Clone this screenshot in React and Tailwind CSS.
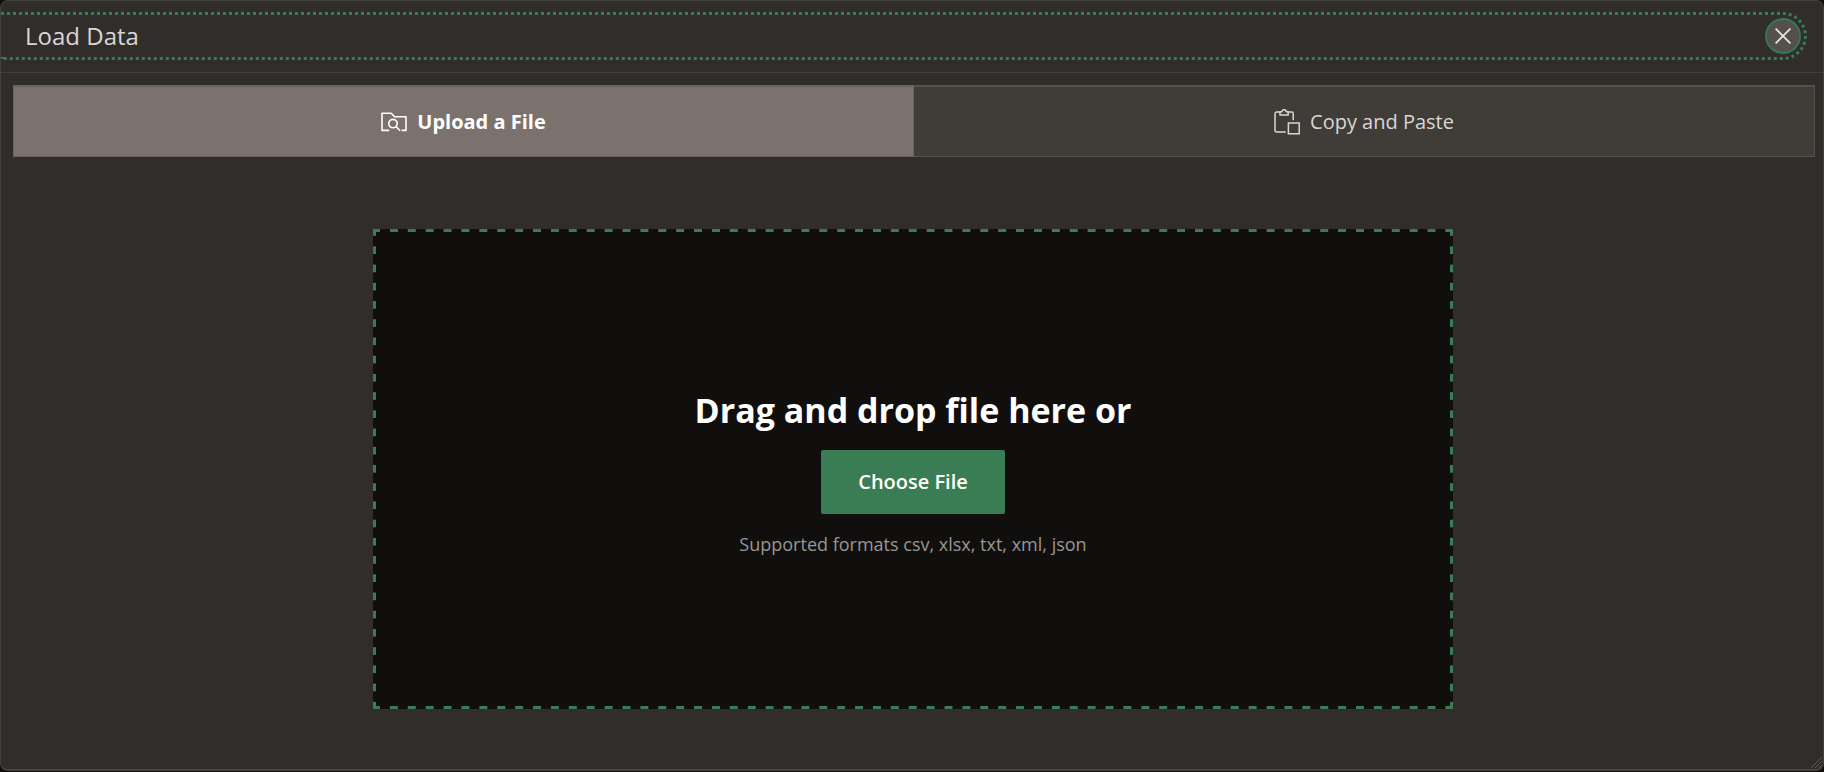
import React, { useRef } from "react";

function FolderSearchIcon() {
  return (
    <svg className="size-[26px]" viewBox="0 0 26 26" fill="none" stroke="currentColor" strokeWidth="1.6" aria-hidden="true">
      <path d="M8.2 21.4H1V4.2h9.2l3.4 3.6H25v13.6h-4.4" strokeLinejoin="round" />
      <circle cx="12" cy="14.6" r="4.2" />
      <path d="M15.1 17.8l4 4" />
    </svg>
  );
}

function ClipboardIcon() {
  return (
    <svg className="size-[26px]" viewBox="0 0 26 26" fill="none" stroke="currentColor" strokeWidth="1.5" aria-hidden="true">
      <path d="M6 3H2.6A1.6 1.6 0 0 0 1 4.6v16.8A1.6 1.6 0 0 0 2.6 23h9.2M14.2 3h3.4a1.6 1.6 0 0 1 1.6 1.6v6.6" />
      <path d="M6 2.8h2a2.1 2.1 0 0 1 4.2 0h2V6H6z" strokeLinejoin="round" />
      <rect x="14.4" y="14" width="10.8" height="10.8" />
    </svg>
  );
}

export default function App() {
  const fileRef = useRef(null);
  return (
    <div className="min-h-screen bg-[#100f0e] pb-px font-['Open_Sans','Noto_Sans',sans-serif] text-[#d9d6d3]">
      <section
        role="dialog"
        aria-labelledby="dialog-title"
        className="relative flex min-h-[calc(100vh-1px)] flex-col overflow-hidden rounded-lg border border-b-2 border-[#45413d] bg-[#312d2a]"
      >
        <header className="border-b border-[#45413d] pt-[11px] pr-4 pb-3">
          <div className="flex h-12 items-center justify-between rounded-r-full border-y-3 border-r-3 border-dotted border-[#3a7d54] pr-[3px] pl-6">
            <h1 id="dialog-title" className="text-2xl">Load Data</h1>
            <button
              type="button"
              aria-label="Close"
              className="flex size-9 items-center justify-center rounded-full border-2 border-[#33794f] bg-[#55504b] text-[#e8e6e4]"
            >
              <svg className="size-4" viewBox="0 0 16 16" fill="none" stroke="currentColor" strokeWidth="1.8" aria-hidden="true">
                <path d="M.6.6l14.8 14.8M15.4.6L.6 15.4" />
              </svg>
            </button>
          </div>
        </header>

        <div role="tablist" className="mt-3 mr-2 ml-3 grid h-[72px] grid-cols-2 text-xl">
          <button
            type="button"
            role="tab"
            aria-selected="true"
            className="flex items-center justify-center gap-2.5 border border-t-2 border-[#6a625d] bg-[#7b726d] font-bold text-white"
          >
            <FolderSearchIcon />
            Upload a File
          </button>
          <button
            type="button"
            role="tab"
            aria-selected="false"
            className="flex items-center justify-center gap-2.5 border border-t-2 border-l-0 border-[#55504a] bg-[#403c38]"
          >
            <ClipboardIcon />
            Copy and Paste
          </button>
        </div>

        <main className="mr-2.5 ml-3 flex justify-center pt-[72px]">
          <div className="flex h-[480px] w-3/5 flex-col items-center justify-center border-3 border-transparent bg-[#100f0e] [background-image:linear-gradient(90deg,#3a7d54_4px,transparent_4px,transparent_calc(100%-4px),#3a7d54_calc(100%-4px)),linear-gradient(90deg,#3a7d54_4px,transparent_4px,transparent_calc(100%-4px),#3a7d54_calc(100%-4px)),linear-gradient(#3a7d54_4px,transparent_4px,transparent_calc(100%-4px),#3a7d54_calc(100%-4px)),linear-gradient(#3a7d54_4px,transparent_4px,transparent_calc(100%-4px),#3a7d54_calc(100%-4px))] [background-position:0_-3px,0_calc(100%+3px),-3px_0,calc(100%+3px)_0] [background-repeat:round_no-repeat,round_no-repeat,no-repeat_round,no-repeat_round] [background-size:18px_3px,18px_3px,3px_18px,3px_18px] pt-1.5">
            <h2 className="text-[34px] leading-12 font-bold text-white">Drag and drop file here or</h2>
            <button
              type="button"
              onClick={() => fileRef.current?.click()}
              className="mt-4 h-16 min-w-46 rounded-xs bg-[#3a7d54] px-9 text-xl font-semibold text-white"
            >
              Choose File
            </button>
            <input ref={fileRef} type="file" aria-label="Choose File" accept=".csv,.xlsx,.txt,.xml,.json" className="hidden" />
            <p className="mt-4 text-lg text-[#999693]">Supported formats csv, xlsx, txt, xml, json</p>
          </div>
        </main>

        <svg className="absolute right-0 bottom-0 size-3" viewBox="0 0 12 12" stroke="#5c5854" strokeWidth="1" aria-hidden="true">
          <path d="M0 11L11 0M4 11l7-7M8 11l3-3" />
        </svg>
      </section>
    </div>
  );
}
